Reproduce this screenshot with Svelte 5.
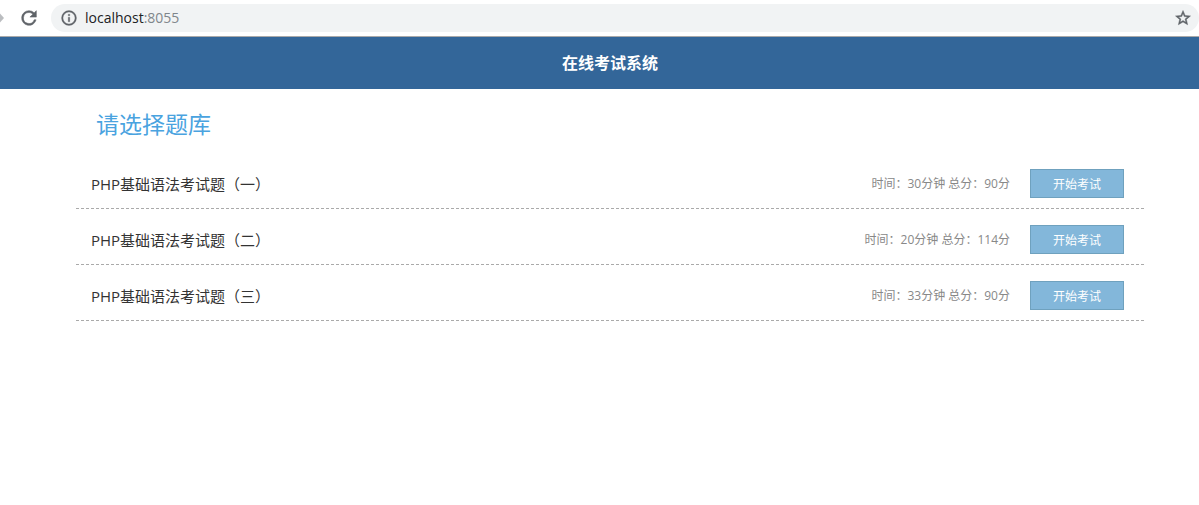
<script>
  const papers = [
    { id: 1, name: 'PHP基础语法考试题（一）', minutes: 30, score: 90 },
    { id: 2, name: 'PHP基础语法考试题（二）', minutes: 20, score: 114 },
    { id: 3, name: 'PHP基础语法考试题（三）', minutes: 33, score: 90 }
  ];
</script>

<div class="toolbar">
  <button class="icon forward" aria-label="Forward">
    <svg width="4" height="12" viewBox="0 0 4 12"><path d="M0 1.6 4 6 0 10.4z" fill="#bbbdc0" /></svg>
  </button>
  <button class="icon reload" aria-label="Reload">
    <svg width="22" height="22" viewBox="0 0 24 24"><path fill="#5f6368" stroke="#5f6368" stroke-width=".6" d="M17.65 6.35A7.96 7.96 0 0 0 12 4a8 8 0 1 0 7.73 10h-2.08A6 6 0 1 1 12 6c1.66 0 3.14.69 4.22 1.78L13 11h7V4z" /></svg>
  </button>
  <div class="address">
    <svg width="18" height="18" viewBox="0 0 24 24"><path fill="#5f6368" stroke="#5f6368" stroke-width=".4" d="M11 7h2v2h-2zm0 4h2v6h-2zm1-9a10 10 0 1 0 0 20 10 10 0 0 0 0-20zm0 18a8 8 0 1 1 0-16 8 8 0 0 1 0 16z" /></svg>
    <span class="url">localhost<span class="port">:8055</span></span>
    <button class="icon" aria-label="Bookmark">
      <svg width="18" height="18" viewBox="0 0 24 24"><path fill="#5f6368" stroke="#5f6368" stroke-width=".6" d="m22 9.24-7.19-.62L12 2 9.19 8.63 2 9.24l5.46 4.73L5.82 21 12 17.27 18.18 21l-1.63-7.03zM12 15.4l-3.76 2.27 1-4.28-3.32-2.88 4.38-.38L12 6.1l1.71 4.04 4.38.38-3.32 2.88 1 4.28z" /></svg>
    </button>
  </div>
</div>

<header><h1>在线考试系统</h1></header>

<main>
  <h2>请选择题库</h2>
  <ul>
    {#each papers as paper (paper.id)}
      <li>
        <span class="name">{paper.name}</span>
        <span class="meta">时间：{paper.minutes}分钟 总分：{paper.score}分</span>
        <button class="start">开始考试</button>
      </li>
    {/each}
  </ul>
</main>

<style>
  :global(body) {
    background: #fff;
    color: #333;
    font-family: "Open Sans", "Noto Sans CJK SC", sans-serif;
  }

  .toolbar {
    display: flex;
    align-items: center;
    height: 36px;
    border-bottom: 1px solid #a9a9a9;
    box-sizing: content-box;
  }

  .icon {
    display: flex;
    padding: 0;
    border: 0;
    background: none;
  }

  .reload {
    margin: 0 11px 0 14px;
  }

  .address {
    display: flex;
    flex: 1;
    align-items: center;
    gap: 7px;
    height: 28px;
    padding: 0 7px 0 9px;
    border-radius: 14px;
    background: #f1f3f4;
  }

  .url {
    flex: 1;
    color: #202124;
    font-size: 14px;
    line-height: 20px;
  }

  .port {
    color: #80868b;
  }

  header {
    padding-left: 21px;
    background: #369;
  }

  h1 {
    margin: 0;
    color: #fff;
    font-size: 16px;
    line-height: 52px;
    text-align: center;
  }

  main {
    padding: 15px 55px 0 76px;
  }

  h2 {
    margin: 0 20px;
    color: #4aa3df;
    font-size: 23px;
    font-weight: 400;
    line-height: 40px;
  }

  ul {
    margin: 9px 0 0;
    padding: 0;
    list-style: none;
  }

  li {
    display: flex;
    align-items: center;
    gap: 20px;
    padding: 16px 20px 10px 15px;
    border-bottom: 1px dashed #aaa;
  }

  .name {
    flex: 1;
    font-size: 15px;
    line-height: 20px;
  }

  .meta {
    color: #888;
    font-size: 12px;
    line-height: 20px;
  }

  .start {
    width: 94px;
    height: 29px;
    padding: 0;
    border: 1px solid #6fa1be;
    background: #83b7da;
    color: #fff;
    font-family: inherit;
    font-size: 12px;
  }
</style>
